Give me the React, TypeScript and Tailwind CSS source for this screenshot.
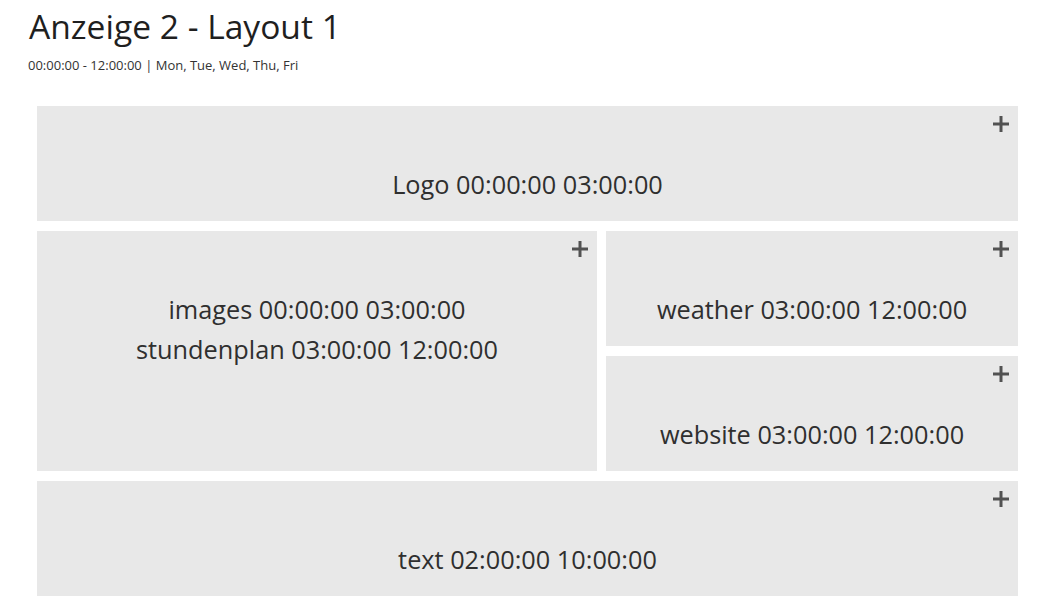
import React from "react";

function Plus() {
  return (
    <svg width="16" height="16" viewBox="0 0 16 16" className="text-[#525252]">
      <rect x="0" y="6.5" width="16" height="3" fill="currentColor" />
      <rect x="6.5" y="0" width="3" height="16" fill="currentColor" />
    </svg>
  );
}

function Slot({ lines, className = "" }: { lines: string[]; className?: string }) {
  return (
    <div className={`bg-[#e8e8e8] pt-[10px] px-[9px] ${className}`}>
      {/* add button */}
      <div className="flex justify-end h-[16px]">
        <button className="cursor-pointer">
          <Plus />
        </button>
      </div>
      <div className="mt-[32px] text-center text-[25.3px] leading-[40px] text-[#2f2f2f]">
        {lines.map((l) => (
          <div key={l}>{l}</div>
        ))}
      </div>
    </div>
  );
}

export default function App() {
  return (
    <div className="min-h-[614px] bg-white px-[28px] pt-[6px] font-['Open_Sans',sans-serif]">
      {/* Header */}
      <h1 className="text-[33.6px] leading-[40px] text-[#1f1f1f] pl-[1px]">Anzeige 2 - Layout 1</h1>
      <p className="mt-[9px] text-[13px] leading-[20px] text-[#333]">
        00:00:00 - 12:00:00 | Mon, Tue, Wed, Thu, Fri
      </p>

      {/* Layout grid */}
      <div className="mx-[9px] mt-[31px] w-[981px] flex flex-col gap-[10px]">
        <Slot className="h-[115px]" lines={["Logo 00:00:00 03:00:00"]} />
        <div className="flex gap-[9px] h-[240px]">
          <Slot
            className="w-[560px]"
            lines={["images 00:00:00 03:00:00", "stundenplan 03:00:00 12:00:00"]}
          />
          <div className="w-[412px] flex flex-col gap-[10px]">
            <Slot className="h-[115px]" lines={["weather 03:00:00 12:00:00"]} />
            <Slot className="h-[115px]" lines={["website 03:00:00 12:00:00"]} />
          </div>
        </div>
        <Slot className="h-[115px]" lines={["text 02:00:00 10:00:00"]} />
      </div>
    </div>
  );
}
